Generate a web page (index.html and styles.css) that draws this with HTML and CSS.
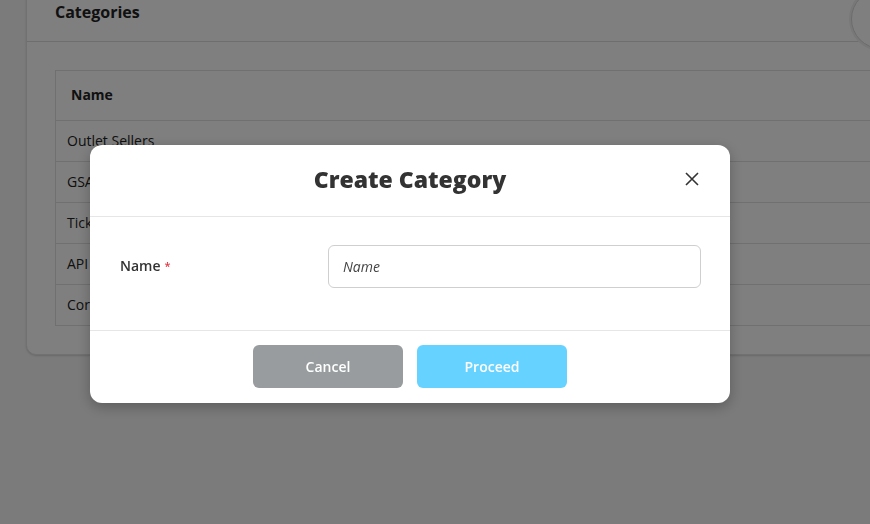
FILE: index.html
```html
<!DOCTYPE html>
<html lang="en">
<head>
<meta charset="utf-8">
<title>Categories</title>
<link rel="stylesheet" href="styles.css">
</head>
<body>
<div class="page">
  <section class="card">
    <header class="card-header">
      <h2 class="card-title">Categories</h2>
      <button class="round-btn" aria-label="Add"></button>
    </header>
    <div class="card-body">
      <table class="table">
        <thead>
          <tr><th>Name</th></tr>
        </thead>
        <tbody>
          <tr><td>Outlet Sellers</td></tr>
          <tr><td>GSA Agents</td></tr>
          <tr><td>Ticketing</td></tr>
          <tr><td>API</td></tr>
          <tr><td>Corporate</td></tr>
        </tbody>
      </table>
    </div>
  </section>
</div>

<div class="backdrop">
  <div class="modal" role="dialog" aria-labelledby="mtitle">
    <div class="modal-header">
      <h3 class="modal-title" id="mtitle">Create Category</h3>
      <button class="close" aria-label="Close">
        <svg width="16" height="16" viewBox="0 0 16 16"><path d="M2 2L14 14M14 2L2 14" stroke="#333" stroke-width="1.6" fill="none"/></svg>
      </button>
    </div>
    <div class="modal-body">
      <label class="label" for="name">Name<span class="req">*</span></label>
      <input class="input" id="name" type="text" placeholder="Name">
    </div>
    <div class="modal-footer">
      <button class="btn btn-cancel">Cancel</button>
      <button class="btn btn-proceed">Proceed</button>
    </div>
  </div>
</div>
</body>
</html>
```

FILE: styles.css
```css
* { box-sizing: border-box; }
html, body {
  margin: 0;
  height: 100%;
  overflow: hidden;
}
body {
  font-family: "Open Sans", "Liberation Sans", sans-serif;
  background: #f6f6f6;
  color: #333;
}
.page {
  padding-left: 26px;
}
.card {
  width: 910px;
  margin-top: -15px;
  background: #fff;
  border: 1px solid #e2e2e2;
  border-radius: 10px;
  box-shadow: 0 1px 2px rgba(0,0,0,0.15);
}
.card-header {
  height: 56px;
  display: flex;
  align-items: center;
  justify-content: space-between;
  padding: 0 24px 4px 28px;
  border-bottom: 1px solid #dcdcdc;
}
.card-title {
  margin: 0;
  font-size: 16px;
  font-weight: 700;
  color: #222;
}
.round-btn {
  width: 60px;
  height: 60px;
  margin-top: 14px;
  border-radius: 50%;
  border: 1px solid #d8d8d8;
  background: #fff;
  box-shadow: 0 0 0 2px #f0f0f0;
  padding: 0;
}
.card-body {
  padding: 28px;
}
.table {
  width: 100%;
  border-collapse: collapse;
  border: 1px solid #e0e0e0;
}
.table th {
  height: 50px;
  text-align: left;
  font-size: 14px;
  font-weight: 700;
  color: #222;
  padding: 0 15px 2px;
  border-bottom: 1px solid #e0e0e0;
}
.table td {
  height: 41px;
  font-size: 14px;
  color: #222;
  padding: 0 11px 2px;
  border-bottom: 1px solid #e0e0e0;
}
.backdrop {
  position: fixed;
  inset: 0;
  background: rgba(0,0,0,0.5);
}
.modal {
  position: absolute;
  left: 90px;
  top: 145px;
  width: 640px;
  background: #fff;
  border-radius: 12px;
  box-shadow: 0 4px 14px rgba(0,0,0,0.25);
}
.modal-header {
  height: 72px;
  display: flex;
  align-items: center;
  justify-content: center;
  position: relative;
  padding-bottom: 3px;
  border-bottom: 1px solid #e6e6e6;
}
.modal-title {
  margin: 0;
  font-size: 23px;
  font-weight: 800;
  color: #333;
}
.close {
  position: absolute;
  right: 30px;
  top: 26px;
  width: 16px;
  height: 16px;
  padding: 0;
  border: 0;
  background: none;
  display: flex;
}
.modal-body {
  display: grid;
  grid-template-columns: 208px 1fr;
  align-items: center;
  padding: 28px 29px 42px 30px;
  border-bottom: 1px solid #e6e6e6;
}
.label {
  font-size: 14px;
  font-weight: 600;
  color: #333;
  padding-bottom: 2px;
}
.req {
  color: #e53945;
  font-size: 11px;
  margin-left: 4px;
  vertical-align: 1px;
}
.input {
  height: 43px;
  border: 1px solid #cfcfcf;
  border-radius: 6px;
  padding: 0 14px;
  font-family: inherit;
  font-size: 14px;
  color: #333;
  outline: none;
}
.input::placeholder {
  font-style: italic;
  color: #444;
}
.modal-footer {
  display: flex;
  justify-content: center;
  gap: 14px;
  padding: 14px 0 15px;
}
.btn {
  width: 150px;
  height: 43px;
  border: 0;
  border-radius: 6px;
  font-family: inherit;
  font-size: 14px;
  font-weight: 600;
  color: #fff;
}
.btn-cancel { background: #989c9e; }
.btn-proceed { background: #66d2ff; }
```
